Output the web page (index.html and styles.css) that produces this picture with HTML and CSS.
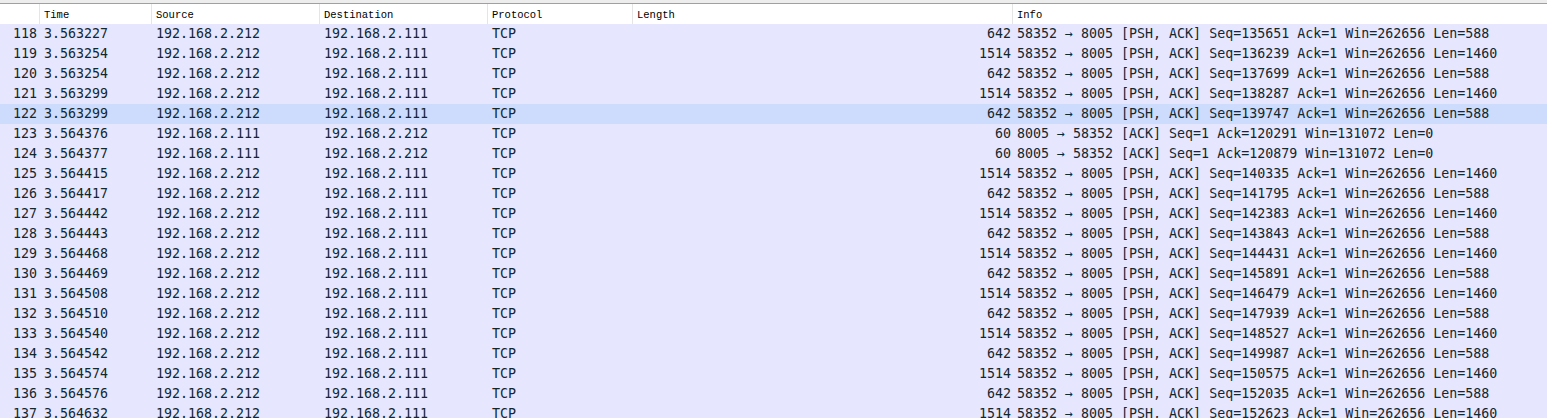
FILE: index.html
```html
<!DOCTYPE html>
<html>
<head>
<meta charset="utf-8">
<link rel="stylesheet" href="styles.css">
</head>
<body>
<div class="list">
  <div class="topbar"></div>
  <div class="head">
    <div class="hc"></div>
    <div class="hc">Time</div>
    <div class="hc">Source</div>
    <div class="hc">Destination</div>
    <div class="hc">Protocol</div>
    <div class="hc">Length</div>
    <div class="hc last">Info</div>
  </div>
  <div class="row"><span class="no">118</span><span>3.563227</span><span>192.168.2.212</span><span>192.168.2.111</span><span>TCP</span><span class="len">642</span><span>58352 → 8005 [PSH, ACK] Seq=135651 Ack=1 Win=262656 Len=588</span></div>
  <div class="row"><span class="no">119</span><span>3.563254</span><span>192.168.2.212</span><span>192.168.2.111</span><span>TCP</span><span class="len">1514</span><span>58352 → 8005 [PSH, ACK] Seq=136239 Ack=1 Win=262656 Len=1460</span></div>
  <div class="row"><span class="no">120</span><span>3.563254</span><span>192.168.2.212</span><span>192.168.2.111</span><span>TCP</span><span class="len">642</span><span>58352 → 8005 [PSH, ACK] Seq=137699 Ack=1 Win=262656 Len=588</span></div>
  <div class="row"><span class="no">121</span><span>3.563299</span><span>192.168.2.212</span><span>192.168.2.111</span><span>TCP</span><span class="len">1514</span><span>58352 → 8005 [PSH, ACK] Seq=138287 Ack=1 Win=262656 Len=1460</span></div>
  <div class="row sel"><span class="no">122</span><span>3.563299</span><span>192.168.2.212</span><span>192.168.2.111</span><span>TCP</span><span class="len">642</span><span>58352 → 8005 [PSH, ACK] Seq=139747 Ack=1 Win=262656 Len=588</span></div>
  <div class="row"><span class="no">123</span><span>3.564376</span><span>192.168.2.111</span><span>192.168.2.212</span><span>TCP</span><span class="len">60</span><span>8005 → 58352 [ACK] Seq=1 Ack=120291 Win=131072 Len=0</span></div>
  <div class="row"><span class="no">124</span><span>3.564377</span><span>192.168.2.111</span><span>192.168.2.212</span><span>TCP</span><span class="len">60</span><span>8005 → 58352 [ACK] Seq=1 Ack=120879 Win=131072 Len=0</span></div>
  <div class="row"><span class="no">125</span><span>3.564415</span><span>192.168.2.212</span><span>192.168.2.111</span><span>TCP</span><span class="len">1514</span><span>58352 → 8005 [PSH, ACK] Seq=140335 Ack=1 Win=262656 Len=1460</span></div>
  <div class="row"><span class="no">126</span><span>3.564417</span><span>192.168.2.212</span><span>192.168.2.111</span><span>TCP</span><span class="len">642</span><span>58352 → 8005 [PSH, ACK] Seq=141795 Ack=1 Win=262656 Len=588</span></div>
  <div class="row"><span class="no">127</span><span>3.564442</span><span>192.168.2.212</span><span>192.168.2.111</span><span>TCP</span><span class="len">1514</span><span>58352 → 8005 [PSH, ACK] Seq=142383 Ack=1 Win=262656 Len=1460</span></div>
  <div class="row"><span class="no">128</span><span>3.564443</span><span>192.168.2.212</span><span>192.168.2.111</span><span>TCP</span><span class="len">642</span><span>58352 → 8005 [PSH, ACK] Seq=143843 Ack=1 Win=262656 Len=588</span></div>
  <div class="row"><span class="no">129</span><span>3.564468</span><span>192.168.2.212</span><span>192.168.2.111</span><span>TCP</span><span class="len">1514</span><span>58352 → 8005 [PSH, ACK] Seq=144431 Ack=1 Win=262656 Len=1460</span></div>
  <div class="row"><span class="no">130</span><span>3.564469</span><span>192.168.2.212</span><span>192.168.2.111</span><span>TCP</span><span class="len">642</span><span>58352 → 8005 [PSH, ACK] Seq=145891 Ack=1 Win=262656 Len=588</span></div>
  <div class="row"><span class="no">131</span><span>3.564508</span><span>192.168.2.212</span><span>192.168.2.111</span><span>TCP</span><span class="len">1514</span><span>58352 → 8005 [PSH, ACK] Seq=146479 Ack=1 Win=262656 Len=1460</span></div>
  <div class="row"><span class="no">132</span><span>3.564510</span><span>192.168.2.212</span><span>192.168.2.111</span><span>TCP</span><span class="len">642</span><span>58352 → 8005 [PSH, ACK] Seq=147939 Ack=1 Win=262656 Len=588</span></div>
  <div class="row"><span class="no">133</span><span>3.564540</span><span>192.168.2.212</span><span>192.168.2.111</span><span>TCP</span><span class="len">1514</span><span>58352 → 8005 [PSH, ACK] Seq=148527 Ack=1 Win=262656 Len=1460</span></div>
  <div class="row"><span class="no">134</span><span>3.564542</span><span>192.168.2.212</span><span>192.168.2.111</span><span>TCP</span><span class="len">642</span><span>58352 → 8005 [PSH, ACK] Seq=149987 Ack=1 Win=262656 Len=588</span></div>
  <div class="row"><span class="no">135</span><span>3.564574</span><span>192.168.2.212</span><span>192.168.2.111</span><span>TCP</span><span class="len">1514</span><span>58352 → 8005 [PSH, ACK] Seq=150575 Ack=1 Win=262656 Len=1460</span></div>
  <div class="row"><span class="no">136</span><span>3.564576</span><span>192.168.2.212</span><span>192.168.2.111</span><span>TCP</span><span class="len">642</span><span>58352 → 8005 [PSH, ACK] Seq=152035 Ack=1 Win=262656 Len=588</span></div>
  <div class="row"><span class="no">137</span><span>3.564632</span><span>192.168.2.212</span><span>192.168.2.111</span><span>TCP</span><span class="len">1514</span><span>58352 → 8005 [PSH, ACK] Seq=152623 Ack=1 Win=262656 Len=1460</span></div>
</div>
</body>
</html>
```

FILE: styles.css
```css
html, body {
  margin: 0;
  padding: 0;
  background: #ffffff;
  overflow: hidden;
}
.list {
  width: 1547px;
}
.topbar {
  height: 3px;
  background: #ededed;
  border-bottom: 1px solid #a0a0a0;
}
.head, .row {
  display: grid;
  grid-template-columns: 40px 112px 168px 168px 145px 380px 1fr;
}
.head {
  height: 20px;
  background: #ffffff;
  font-family: "Liberation Mono", monospace;
  font-size: 10.5px;
  color: #000000;
}
.hc {
  border-right: 1px solid #e5e5e5;
  padding-left: 4px;
  padding-top: 2px;
  line-height: 18px;
  white-space: nowrap;
  overflow: hidden;
}
.hc.last {
  border-right: none;
}
.row {
  height: 20px;
  line-height: 20px;
  background: #e7e6ff;
  color: #12272e;
  font-family: "DejaVu Sans Mono", monospace;
  font-size: 13.3px;
  white-space: nowrap;
}
.row > span {
  padding-left: 4px;
  overflow: hidden;
}
.row.sel {
  background: #cddcfd;
}
.row > span.no {
  padding-left: 0;
  padding-right: 3px;
  text-align: right;
}
.row > span.len {
  padding-left: 0;
  padding-right: 2px;
  text-align: right;
}
.row > span:last-child {
  padding-left: 4px;
}
```
